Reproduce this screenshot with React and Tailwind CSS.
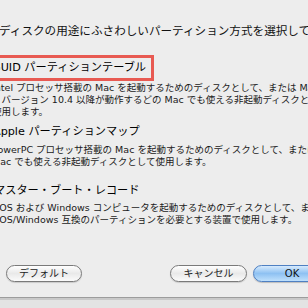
const FONT = "font-['DejaVu_Sans','Noto_Sans_CJK_JP',sans-serif]";

function Desc({ lines, className = '' }) {
  return (
    <div className={`ml-[-8px] text-[9.5px] leading-[12px] text-[#1a1a1a] whitespace-nowrap ${className}`}>
      {lines.map((l) => (
        <div key={l}>{l}</div>
      ))}
    </div>
  );
}

function PillButton({ children, className = '' }) {
  return (
    <div
      className={`h-[17px] w-[76px] shrink-0 rounded-full border border-[#7a7a7a] bg-gradient-to-b from-[#ffffff] via-[#e9e9e9] to-[#fbfbfb] flex items-center justify-center text-[10px] text-[#222] shadow-[0_1px_1px_rgba(0,0,0,0.15)] ${className}`}
    >
      {children}
    </div>
  );
}

export default function App() {
  return (
    <div className={`w-[308px] h-[308px] overflow-hidden bg-[#ededed] flex flex-col ${FONT}`}>
      <div className="mt-[24px] ml-[-1px] text-[11.6px] leading-[14px] text-[#111] whitespace-nowrap">
        ディスクの用途にふさわしいパーティション方式を選択してください：
      </div>

      <div className="mt-[17px] ml-[-11px] w-[165px] h-[26px] border-[3px] border-[#e85a52] text-[11.2px] leading-[20px] text-black whitespace-nowrap">
        GUID パーティションテーブル
      </div>
      <Desc
        className="mt-[1px]"
        lines={[
          'Intel プロセッサ搭載の Mac を起動するためのディスクとして、または Mac OS',
          'X バージョン 10.4 以降が動作するどの Mac でも使える非起動ディスクとして',
          '使用します。',
        ]}
      />

      <div className="mt-[4px] ml-[-7px] text-[11.2px] leading-[20px] text-black whitespace-nowrap">
        Apple パーティションマップ
      </div>
      <Desc
        className="mt-[2px]"
        lines={[
          'PowerPC プロセッサ搭載の Mac を起動するためのディスクとして、または',
          'Mac でも使える非起動ディスクとして使用します。',
        ]}
      />

      <div className="mt-[13px] ml-[-6px] text-[11.2px] leading-[20px] text-black whitespace-nowrap">
        マスター・ブート・レコード
      </div>
      <Desc
        className="mt-[1px]"
        lines={[
          'DOS および Windows コンピュータを起動するためのディスクとして、また',
          'DOS/Windows 互換のパーティションを必要とする装置で使用します。',
        ]}
      />

      <div className="mt-[39px] flex items-center">
        <PillButton className="ml-[6px]">デフォルト</PillButton>
        <PillButton className="ml-[88px] w-[77px]">キャンセル</PillButton>
        <div className="ml-[6px] h-[17px] w-[78px] shrink-0 rounded-full border border-[#4f80c2] bg-gradient-to-b from-[#d6eafd] via-[#8ec1f2] to-[#bfe0fc] flex items-center justify-center text-[10px] text-[#111] shadow-[0_1px_1px_rgba(0,0,0,0.2)]">
          OK
        </div>
      </div>

      <div className="mt-[15px] h-[1px] bg-[#9c9c9c]" />
      <div className="h-[2px] bg-[#c9c9c9]" />
      <div className="flex-1 bg-[#e3e3e3]" />
    </div>
  );
}
